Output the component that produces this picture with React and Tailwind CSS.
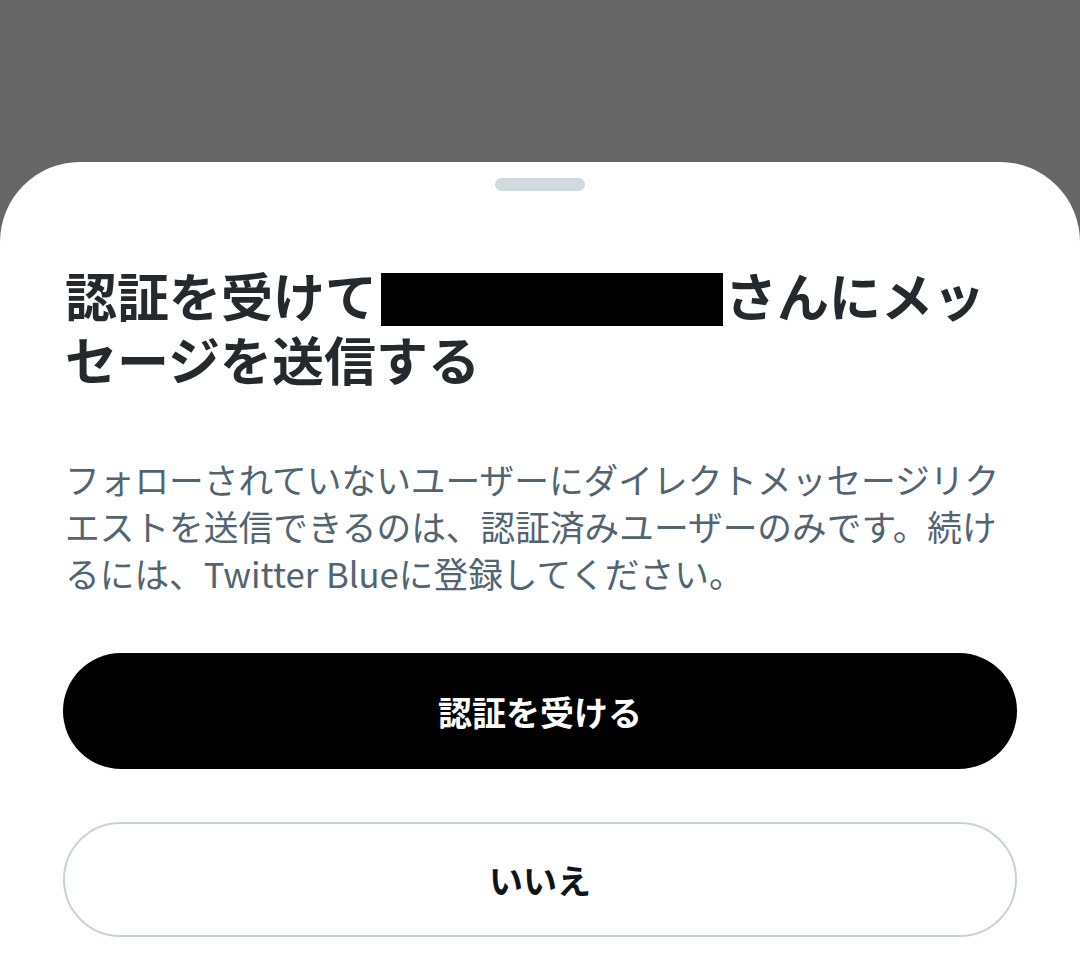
import React from "react";

const font = {
  fontFamily: '"Noto Sans CJK JP", "Noto Sans", sans-serif',
};

const App = () => {
  return (
    <div className="w-[1080px] h-[980px] bg-[#666666] flex flex-col overflow-hidden" style={font}>
      <div className="h-[162px] shrink-0" />
      <div className="flex-1 bg-white rounded-t-[80px] flex flex-col px-[63px]">
        {/* drag handle */}
        <div className="mt-[16px] self-center w-[90px] h-[13px] rounded-full bg-[#cfd9de]" />

        <h2 className="mt-[72px] text-[52px] leading-[64px] font-bold text-[#24292d] pl-[2px] whitespace-nowrap">
          認証を受けて
          <span className="inline-block align-middle w-[342px] h-[53px] bg-black ml-[4px] mr-[2px] -mt-[6px]" />
          さんにメッ
          <br />
          セージを送信する
        </h2>

        <p className="mt-[65px] text-[34.7px] leading-[47px] text-[#536471] pl-[2px] whitespace-nowrap">
          フォローされていないユーザーにダイレクトメッセージリク
          <br />
          エストを送信できるのは、認証済みユーザーのみです。続け
          <br />
          るには、Twitter Blueに登録してください。
        </p>

        <button className="mt-[56px] h-[116px] w-full rounded-full bg-black text-white text-[34px] font-bold">
          認証を受ける
        </button>

        <button className="mt-[53px] h-[115px] w-full rounded-full border-2 border-[#c8d3d8] bg-white text-[#0f1419] text-[34px] font-bold">
          いいえ
        </button>
      </div>
    </div>
  );
};

export default App;
